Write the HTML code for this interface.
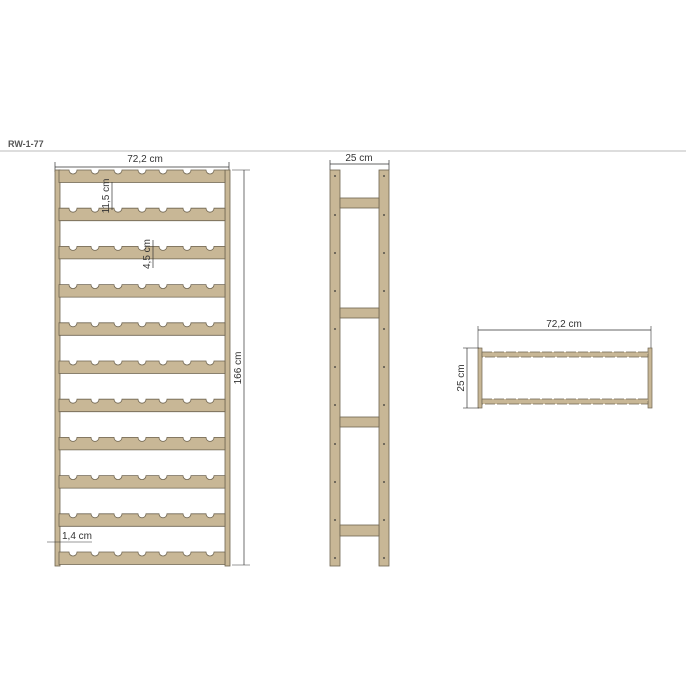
<!DOCTYPE html><html><head><style>body{margin:0;background:#fff}svg{display:block}text{font-family:"Liberation Sans","DejaVu Sans",sans-serif;font-size:10px;fill:#333}</style></head><body>
<svg width="700" height="700" viewBox="0 0 700 700" xmlns="http://www.w3.org/2000/svg">
<defs>
<g id="shelf"><path d="M59 0 H69 A4 4 0 0 0 77 0 H91 A4 4 0 0 0 99 0 H114 A4 4 0 0 0 122 0 H138 A4 4 0 0 0 146 0 H159 A4 4 0 0 0 167 0 H183 A4 4 0 0 0 191 0 H206 A4 4 0 0 0 214 0 H225 V12.5 H59 Z" fill="#c8b796" stroke="#6e6450" stroke-width="0.8"/></g>
</defs>
<text x="8" y="147" style="font-size:9px;font-weight:bold;fill:#555">RW-1-77</text>
<line x1="0" y1="151" x2="686" y2="151" stroke="#bbb" stroke-width="1"/>
<!-- front view -->
<line x1="55" y1="167" x2="229" y2="167" stroke="#333" stroke-width="0.7"/>
<line x1="55" y1="162" x2="55" y2="172" stroke="#333" stroke-width="0.7"/>
<line x1="229" y1="162" x2="229" y2="172" stroke="#333" stroke-width="0.7"/>
<text x="145" y="162" text-anchor="middle">72,2 cm</text>
<rect x="55" y="170" width="5" height="396" fill="#c8b796" stroke="#6e6450" stroke-width="0.8"/>
<rect x="225" y="170" width="5" height="396" fill="#c8b796" stroke="#6e6450" stroke-width="0.8"/>
<use href="#shelf" y="170"/><use href="#shelf" y="208.2"/><use href="#shelf" y="246.4"/><use href="#shelf" y="284.6"/><use href="#shelf" y="322.8"/><use href="#shelf" y="361"/><use href="#shelf" y="399.2"/><use href="#shelf" y="437.4"/><use href="#shelf" y="475.6"/><use href="#shelf" y="513.8"/><use href="#shelf" y="552"/>
<line x1="232" y1="170" x2="250" y2="170" stroke="#333" stroke-width="0.6"/>
<line x1="232" y1="565" x2="250" y2="565" stroke="#333" stroke-width="0.6"/>
<line x1="244" y1="170" x2="244" y2="565" stroke="#333" stroke-width="0.7"/>
<text transform="translate(241 368) rotate(-90)" text-anchor="middle">166 cm</text>
<line x1="112" y1="182" x2="112" y2="210" stroke="#333" stroke-width="0.7"/>
<text transform="translate(109 196) rotate(-90)" text-anchor="middle">11,5 cm</text>
<line x1="153" y1="240" x2="153" y2="268" stroke="#333" stroke-width="0.7"/>
<text transform="translate(150 254) rotate(-90)" text-anchor="middle">4,5 cm</text>
<line x1="47" y1="542" x2="92" y2="542" stroke="#333" stroke-width="0.6"/>
<text x="62" y="539">1,4 cm</text>
<!-- side view -->
<line x1="330" y1="164" x2="389" y2="164" stroke="#333" stroke-width="0.7"/>
<line x1="330" y1="160" x2="330" y2="170" stroke="#333" stroke-width="0.7"/>
<line x1="389" y1="160" x2="389" y2="170" stroke="#333" stroke-width="0.7"/>
<text x="359" y="161" text-anchor="middle">25 cm</text>
<rect x="330" y="170" width="10" height="396" fill="#c8b796" stroke="#6e6450" stroke-width="0.8"/>
<rect x="379" y="170" width="10" height="396" fill="#c8b796" stroke="#6e6450" stroke-width="0.8"/>
<rect x="340" y="198" width="39" height="10" fill="#c8b796" stroke="#6e6450" stroke-width="0.8"/>
<rect x="340" y="308" width="39" height="10" fill="#c8b796" stroke="#6e6450" stroke-width="0.8"/>
<rect x="340" y="417" width="39" height="10" fill="#c8b796" stroke="#6e6450" stroke-width="0.8"/>
<rect x="340" y="525" width="39" height="11" fill="#c8b796" stroke="#6e6450" stroke-width="0.8"/>
<g fill="#333">
<circle cx="335" cy="176" r="0.9"/><circle cx="384" cy="176" r="0.9"/>
<circle cx="335" cy="215" r="0.9"/><circle cx="384" cy="215" r="0.9"/>
<circle cx="335" cy="253" r="0.9"/><circle cx="384" cy="253" r="0.9"/>
<circle cx="335" cy="291" r="0.9"/><circle cx="384" cy="291" r="0.9"/>
<circle cx="335" cy="329" r="0.9"/><circle cx="384" cy="329" r="0.9"/>
<circle cx="335" cy="367" r="0.9"/><circle cx="384" cy="367" r="0.9"/>
<circle cx="335" cy="405" r="0.9"/><circle cx="384" cy="405" r="0.9"/>
<circle cx="335" cy="444" r="0.9"/><circle cx="384" cy="444" r="0.9"/>
<circle cx="335" cy="482" r="0.9"/><circle cx="384" cy="482" r="0.9"/>
<circle cx="335" cy="520" r="0.9"/><circle cx="384" cy="520" r="0.9"/>
<circle cx="335" cy="558" r="0.9"/><circle cx="384" cy="558" r="0.9"/>
</g>
<!-- top view -->
<line x1="478" y1="330" x2="651" y2="330" stroke="#333" stroke-width="0.7"/>
<line x1="478" y1="326" x2="478" y2="348" stroke="#333" stroke-width="0.6"/>
<line x1="651" y1="326" x2="651" y2="348" stroke="#333" stroke-width="0.6"/>
<text x="564" y="327" text-anchor="middle">72,2 cm</text>
<rect x="478" y="348" width="4" height="60" fill="#c8b796" stroke="#6e6450" stroke-width="0.7"/>
<rect x="648" y="348" width="4" height="60" fill="#c8b796" stroke="#6e6450" stroke-width="0.7"/>
<rect x="482" y="352" width="166" height="5" fill="#c8b796" stroke="#6e6450" stroke-width="0.7" stroke-dasharray="10 2"/>
<rect x="482" y="399" width="166" height="5" fill="#c8b796" stroke="#6e6450" stroke-width="0.7" stroke-dasharray="10 2"/>
<line x1="467" y1="348" x2="467" y2="408" stroke="#333" stroke-width="0.7"/>
<line x1="463" y1="348" x2="479" y2="348" stroke="#333" stroke-width="0.6"/>
<line x1="463" y1="408" x2="479" y2="408" stroke="#333" stroke-width="0.6"/>
<text transform="translate(464 378) rotate(-90)" text-anchor="middle">25 cm</text>
</svg>
</body></html>
